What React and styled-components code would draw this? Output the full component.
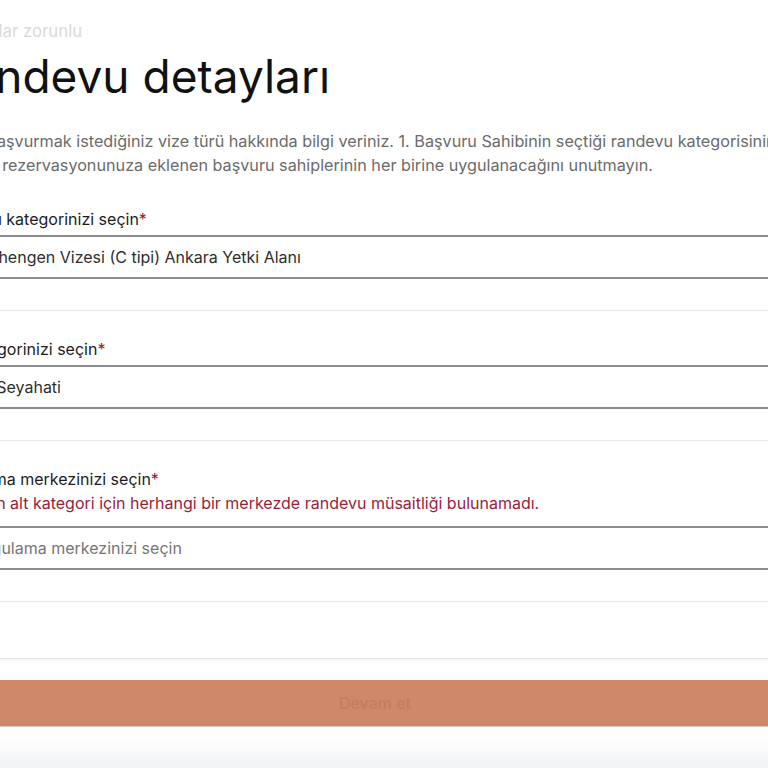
import React from "react";
import styled, { createGlobalStyle } from "styled-components";

const Global = createGlobalStyle`
  html, body { margin: 0; padding: 0; background: #ffffff; }
  body { overflow: hidden; font-family: Inter, "Noto Sans", sans-serif; }
  #root { width: 768px; height: 768px; overflow: hidden; }
`;

const Viewport = styled.div`
  width: 768px;
  height: 768px;
  overflow: hidden;
  display: flex;
  flex-direction: column;
  background: linear-gradient(#ffffff 0, #ffffff 736px, #f3f4f6 762px);
`;

const Content = styled.div`
  width: 870px;
  margin-left: -60px;
  flex-shrink: 0;
  display: flex;
  flex-direction: column;
`;

const Required = styled.div`
  font-size: 16.8px;
  line-height: 20px;
  color: #dadada;
  margin-top: 21px;
  white-space: nowrap;
`;

const Title = styled.h1`
  margin: 7px 0 0;
  font-size: 46px;
  line-height: 56px;
  font-weight: 400;
  color: #111111;
  white-space: nowrap;
`;

const Intro = styled.p`
  margin: 25px 0 0;
  font-size: 16.2px;
  line-height: 24px;
  color: #6b6b6b;
  white-space: nowrap;
`;

const Card = styled.div`
  display: flex;
  flex-direction: column;
  margin-top: 30px;
  border-bottom: 1px solid #e4e4e6;
  box-shadow: 0 2px 3px rgba(0, 0, 0, 0.04);
  padding-bottom: 56px;
`;

const Field = styled.div`
  display: flex;
  flex-direction: column;
  padding-top: ${(p) => p.$top}px;
  padding-bottom: 31px;
  border-bottom: 1px solid #e8e8e8;
`;

const Label = styled.label`
  font-size: 16px;
  line-height: 24px;
  color: #1d1d1d;
  white-space: nowrap;
`;

const Star = styled.span`
  color: #8e1b2e;
`;

const ErrorText = styled.div`
  font-size: 16px;
  line-height: 24px;
  color: #9a2238;
  white-space: nowrap;
  margin-bottom: 7px;
`;

const Select = styled.div`
  margin-top: 4px;
  height: 40px;
  border-top: 2px solid #8c8c8c;
  border-bottom: 2px solid #8c8c8c;
  display: flex;
  align-items: center;
  padding-left: ${(p) => (p.$placeholder ? 31 : 39)}px;
  font-size: 16px;
  color: ${(p) => (p.$placeholder ? "#767676" : "#2e2e2e")};
  white-space: nowrap;
`;

const Button = styled.button`
  margin-top: 21px;
  height: 46px;
  border: none;
  border-radius: 2px;
  background: #cf896a;
  color: #c47d5f;
  font-family: Inter, "Noto Sans", sans-serif;
  font-size: 16px;
  font-weight: 500;
  box-shadow: 0 1px 1px rgba(120, 90, 70, 0.35);
`;

export default function App() {
  return (
    <>
      <Global />
      <Viewport>
        <Content>
          <Required>Bu alanlar zorunlu</Required>
          <Title>Randevu detayları</Title>
          <Intro>
            Şimdi başvurmak istediğiniz vize türü hakkında bilgi veriniz. 1. Başvuru Sahibinin seçtiği randevu kategorisinin,
            <br />
            sizin ve rezervasyonunuza eklenen başvuru sahiplerinin her birine uygulanacağını unutmayın.
          </Intro>
          <Card>
            <Field $top={0}>
              <Label>
                Başvuru kategorinizi seçin<Star>*</Star>
              </Label>
              <Select>Schengen Vizesi (C tipi) Ankara Yetki Alanı</Select>
            </Field>
            <Field $top={26}>
              <Label>
                Alt kategorinizi seçin<Star>*</Star>
              </Label>
              <Select>İş Seyahati</Select>
            </Field>
            <Field $top={26}>
              <Label>
                Uygulama merkezinizi seçin<Star>*</Star>
              </Label>
              <ErrorText>
                Belirtilen alt kategori için herhangi bir merkezde randevu müsaitliği bulunamadı.
              </ErrorText>
              <Select $placeholder>Uygulama merkezinizi seçin</Select>
            </Field>
          </Card>
          <Button disabled>Devam et</Button>
        </Content>
      </Viewport>
    </>
  );
}
